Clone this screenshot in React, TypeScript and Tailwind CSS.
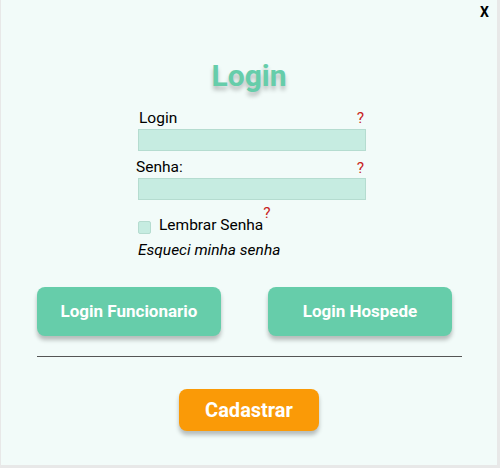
export default function App() {
  return (
    <div className="w-[500px] h-[468px] bg-[#e8e8e8] font-['Roboto',sans-serif]">
      <div className="relative ml-px w-[496px] h-[465px] bg-[#f2fbf9] flex flex-col">
        {/* close */}
        <button className="absolute top-[4px] right-[8px] text-[14px] leading-[17px] font-bold text-black">
          X
        </button>

        <h1 className="mt-[58px] text-center text-[30px] leading-[36px] font-bold text-[#66cdaa] [text-shadow:0_4px_4px_rgba(0,0,0,0.25)]">
          Login
        </h1>

        {/* form */}
        <div className="ml-[135px] w-[231px] flex flex-col text-[15.5px] leading-[18px] text-black">
          <div className="mt-[15px] flex justify-between">
            <label className="ml-[3px]">Login</label>
            <span className="mr-[3px] text-[#c81e1e]">?</span>
          </div>
          <input className="mt-[2px] ml-[2px] w-[228px] h-[22px] bg-[#c6ece1] border border-[#b5dcd0] outline-none" />

          <div className="mt-[7px] flex justify-between">
            <label>Senha:</label>
            <span className="mr-[3px] mt-px text-[#c81e1e]">?</span>
          </div>
          <input
            type="password"
            className="mt-px ml-[2px] w-[228px] h-[22px] bg-[#c6ece1] border border-[#b5dcd0] outline-none"
          />

          <div className="mt-[16px] ml-[2px] flex items-start">
            <span className="mt-[5px] w-[13px] h-[13px] rounded-[2px] bg-[#c6ece1] border border-[#b5dcd0]" />
            <span className="ml-[8px]">Lembrar Senha</span>
            <span className="-mt-[12px] text-[#c81e1e]">?</span>
          </div>

          <a className="mt-[7px] ml-[2px] italic">Esqueci minha senha</a>
        </div>

        {/* buttons */}
        <div className="mt-[28px] ml-[36px] flex gap-[47px]">
          <button className="w-[184px] h-[49px] rounded-[8px] bg-[#66cdaa] text-white font-bold text-[17px] shadow-[0_4px_4px_rgba(0,0,0,0.25)]">
            Login Funcionario
          </button>
          <button className="w-[184px] h-[49px] rounded-[8px] bg-[#66cdaa] text-white font-bold text-[17px] shadow-[0_4px_4px_rgba(0,0,0,0.25)]">
            Login Hospede
          </button>
        </div>

        <div className="mt-[20px] ml-[36px] w-[425px] h-px bg-[#555555]" />

        <button className="mt-[32px] self-center w-[140px] h-[42px] rounded-[8px] bg-[#fa9a07] text-white font-bold text-[20px] shadow-[0_4px_4px_rgba(0,0,0,0.25)]">
          Cadastrar
        </button>
      </div>
    </div>
  )
}
